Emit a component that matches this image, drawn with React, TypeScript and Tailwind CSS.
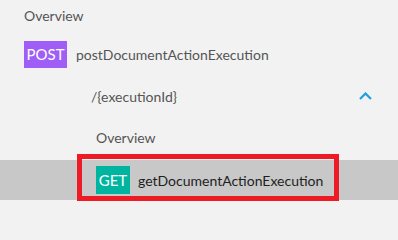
import { ReactNode } from "react";

const Row = ({
  className,
  children,
}: {
  className: string;
  children: ReactNode;
}) => <div className={`flex items-center ${className}`}>{children}</div>;

const App = () => {
  return (
    <div
      className="min-h-screen w-[398px] overflow-hidden bg-[#f2f2f2] text-[14px] text-[#555555]"
      style={{ fontFamily: 'Lato, "Open Sans", sans-serif' }}
    >
      <div className="flex flex-col">
        <Row className="h-[30px] pl-[24px]">
          <span>Overview</span>
        </Row>

        <Row className="h-[48px] pl-[24px] gap-[9px]">
          <span className="flex items-center justify-center w-[43px] h-[27px] bg-[#9f5ef6] text-white text-[15px]">
            POST
          </span>
          <span>postDocumentActionExecution</span>
        </Row>

        <Row className="h-[36px] pl-[91px] pr-[26px] justify-between">
          <span>/&#123;executionId&#125;</span>
          <svg width="13" height="8" viewBox="0 0 13 8" fill="none">
            <polyline
              points="1,7 6.5,1.5 12,7"
              stroke="#1ba1e2"
              strokeWidth="2.2"
            />
          </svg>
        </Row>

        <Row className="h-[46px] pl-[96px]">
          <span>Overview</span>
        </Row>

        <div className="relative flex items-center h-[40px] pl-[96px] gap-[8px] bg-[#c8c8c8] text-[#1e1e1e]">
          <span className="flex items-center justify-center w-[34px] h-[28px] bg-[#00b5a0] text-white text-[15px]">
            GET
          </span>
          <span>getDocumentActionExecution</span>
          <div className="absolute left-[77px] top-[-6px] w-[262px] h-[47px] border-[5px] border-[#ed1c24]" />
        </div>
      </div>
    </div>
  );
};

export default App;
